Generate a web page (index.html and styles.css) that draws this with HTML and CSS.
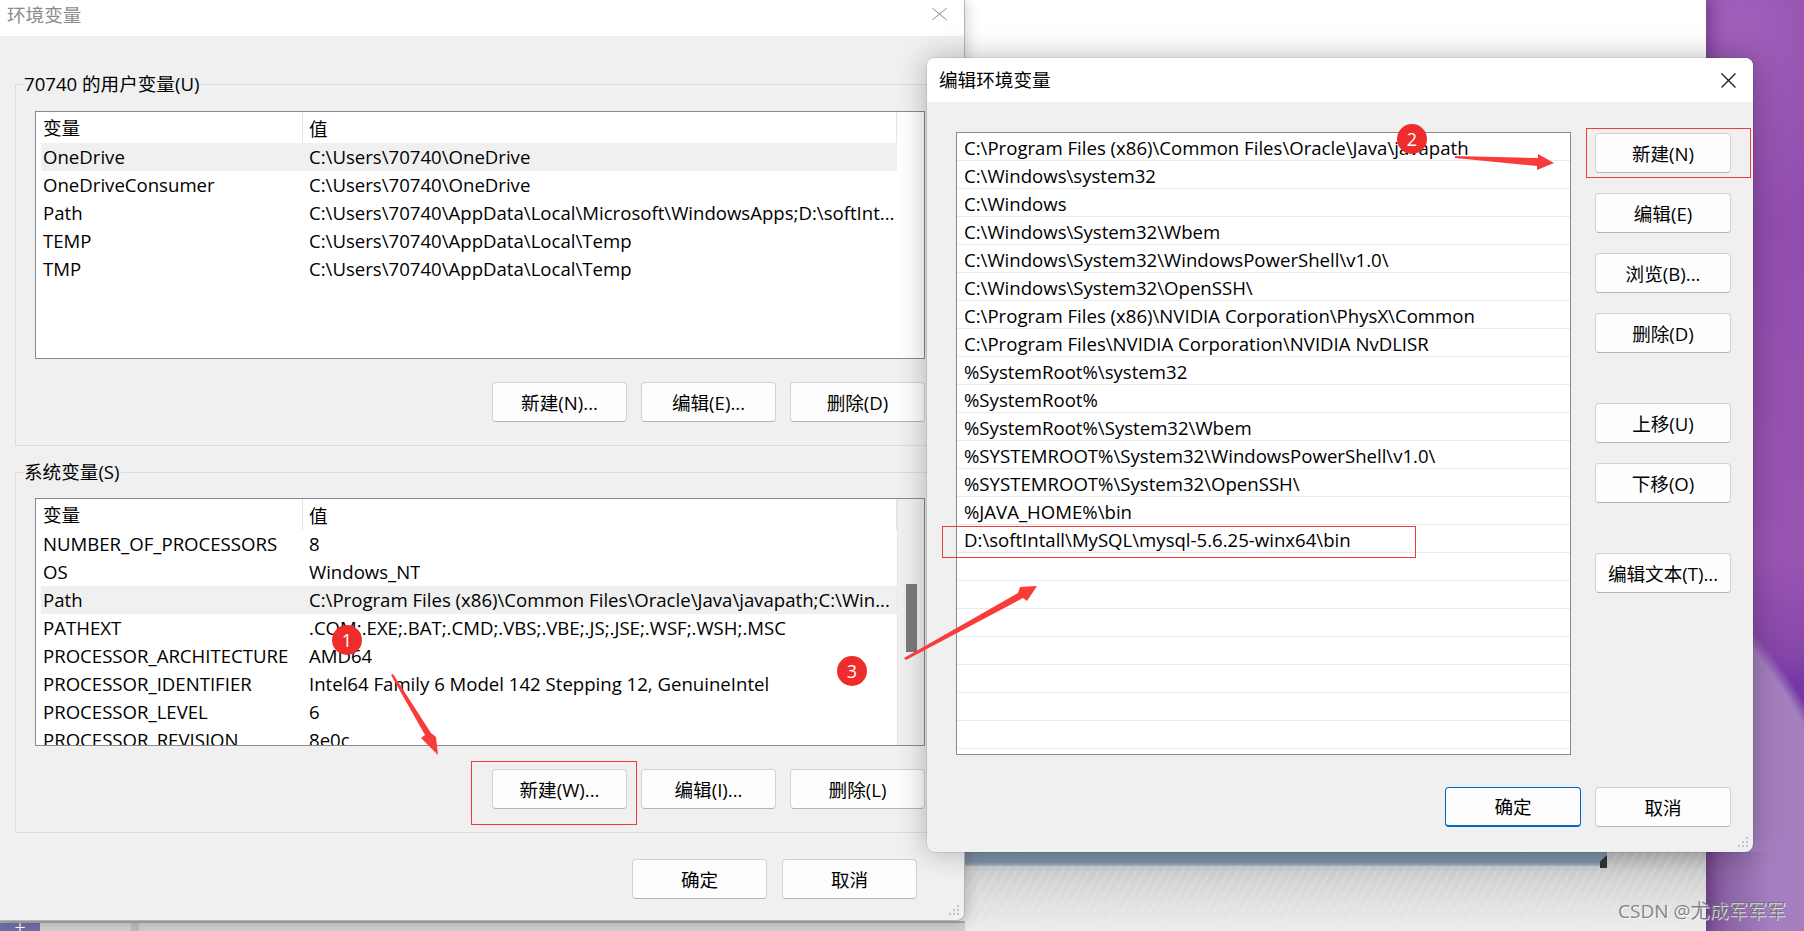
FILE: index.html
```html
<!DOCTYPE html>
<html lang="zh">
<head>
<meta charset="utf-8">
<title>环境变量</title>
<link rel="stylesheet" href="styles.css">
</head>
<body>
<div class="desktop">
  <div class="app-window">
    <div class="app-stripes">
      <div class="app-band"><span class="app-corner"></span></div>
    </div>
  </div>
  <div class="taskbit"><span class="task-icon">王</span><span class="task-gap"></span></div>

  <section class="dialog env">
    <header class="env-title"><span class="env-title-text">环境变量</span>
      <svg class="x-icon" viewBox="0 0 14 14" preserveAspectRatio="none"><path vector-effect="non-scaling-stroke" d="M1 1 13 13M13 1 1 13"/></svg>
    </header>

    <div class="group first">
      <div class="legend">70740 的用户变量(U)</div>
      <div class="list">
        <div class="list-main">
          <div class="thead"><span class="c1">变量</span><span class="c2">值</span></div>
          <div class="tr hl"><span class="c1">OneDrive</span><span class="c2">C:\Users\70740\OneDrive</span></div>
          <div class="tr"><span class="c1">OneDriveConsumer</span><span class="c2">C:\Users\70740\OneDrive</span></div>
          <div class="tr"><span class="c1">Path</span><span class="c2">C:\Users\70740\AppData\Local\Microsoft\WindowsApps;D:\softInt...</span></div>
          <div class="tr"><span class="c1">TEMP</span><span class="c2">C:\Users\70740\AppData\Local\Temp</span></div>
          <div class="tr"><span class="c1">TMP</span><span class="c2">C:\Users\70740\AppData\Local\Temp</span></div>
        </div>
        <div class="scroll-space"></div>
      </div>
      <div class="btn-row">
        <button class="btn">新建(N)...</button>
        <button class="btn">编辑(E)...</button>
        <button class="btn">删除(D)</button>
      </div>
    </div>

    <div class="group second">
      <div class="legend">系统变量(S)</div>
      <div class="list">
        <div class="list-main">
          <div class="thead"><span class="c1">变量</span><span class="c2">值</span></div>
          <div class="tr"><span class="c1">NUMBER_OF_PROCESSORS</span><span class="c2">8</span></div>
          <div class="tr"><span class="c1">OS</span><span class="c2">Windows_NT</span></div>
          <div class="tr hl"><span class="c1">Path</span><span class="c2">C:\Program Files (x86)\Common Files\Oracle\Java\javapath;C:\Win...</span></div>
          <div class="tr"><span class="c1">PATHEXT</span><span class="c2">.COM;.EXE;.BAT;.CMD;.VBS;.VBE;.JS;.JSE;.WSF;.WSH;.MSC</span></div>
          <div class="tr"><span class="c1">PROCESSOR_ARCHITECTURE</span><span class="c2">AMD64</span></div>
          <div class="tr"><span class="c1">PROCESSOR_IDENTIFIER</span><span class="c2">Intel64 Family 6 Model 142 Stepping 12, GenuineIntel</span></div>
          <div class="tr"><span class="c1">PROCESSOR_LEVEL</span><span class="c2">6</span></div>
          <div class="tr"><span class="c1">PROCESSOR_REVISION</span><span class="c2">8e0c</span></div>
        </div>
        <div class="scrollbar"><div class="thumb"></div></div>
      </div>
      <div class="btn-row">
        <button class="btn">新建(W)...</button>
        <button class="btn">编辑(I)...</button>
        <button class="btn">删除(L)</button>
      </div>
    </div>

    <footer class="env-foot">
      <button class="btn">确定</button>
      <button class="btn">取消</button>
    </footer>
    <svg class="grip" viewBox="0 0 12 12"><path d="M9 1h2v2H9zM5 5h2v2H5zM9 5h2v2H9zM1 9h2v2H1zM5 9h2v2H5zM9 9h2v2H9z"/></svg>
  </section>

  <section class="dialog edit">
    <header class="edit-title"><span>编辑环境变量</span>
      <svg class="x-icon dark" viewBox="0 0 14 14"><path d="M0.5 0.5 13.5 13.5M13.5 0.5 0.5 13.5"/></svg>
    </header>
    <div class="edit-body">
      <div class="path-list">
        <div class="path-row">C:\Program Files (x86)\Common Files\Oracle\Java\javapath</div>
        <div class="path-row">C:\Windows\system32</div>
        <div class="path-row">C:\Windows</div>
        <div class="path-row">C:\Windows\System32\Wbem</div>
        <div class="path-row">C:\Windows\System32\WindowsPowerShell\v1.0\</div>
        <div class="path-row">C:\Windows\System32\OpenSSH\</div>
        <div class="path-row">C:\Program Files (x86)\NVIDIA Corporation\PhysX\Common</div>
        <div class="path-row">C:\Program Files\NVIDIA Corporation\NVIDIA NvDLISR</div>
        <div class="path-row">%SystemRoot%\system32</div>
        <div class="path-row">%SystemRoot%</div>
        <div class="path-row">%SystemRoot%\System32\Wbem</div>
        <div class="path-row">%SYSTEMROOT%\System32\WindowsPowerShell\v1.0\</div>
        <div class="path-row">%SYSTEMROOT%\System32\OpenSSH\</div>
        <div class="path-row">%JAVA_HOME%\bin</div>
        <div class="path-row">D:\softIntall\MySQL\mysql-5.6.25-winx64\bin</div>
        <div class="path-row"></div><div class="path-row"></div><div class="path-row"></div>
        <div class="path-row"></div><div class="path-row"></div><div class="path-row"></div>
        <div class="path-row"></div>
      </div>
      <div class="side-btns">
        <button class="btn wide">新建(N)</button>
        <button class="btn wide">编辑(E)</button>
        <button class="btn wide">浏览(B)...</button>
        <button class="btn wide">删除(D)</button>
        <button class="btn wide spaced">上移(U)</button>
        <button class="btn wide">下移(O)</button>
        <button class="btn wide spaced">编辑文本(T)...</button>
      </div>
    </div>
    <footer class="edit-foot">
      <button class="btn wide primary">确定</button>
      <button class="btn wide">取消</button>
    </footer>
    <svg class="grip" viewBox="0 0 12 12"><path d="M9 1h2v2H9zM5 5h2v2H5zM9 5h2v2H9zM1 9h2v2H1zM5 9h2v2H5zM9 9h2v2H9z"/></svg>
  </section>

  <svg class="marks" viewBox="0 0 1804 931">
    <rect class="box" x="471.5" y="761.5" width="165" height="63"/>
    <rect class="box" x="1586.5" y="128.5" width="164" height="49"/>
    <rect class="box" x="942.5" y="526.5" width="473" height="31"/>
    <polygon class="arrow" points="391,675 393,674 431,733 436,737 438,755 421,738 425,735"/>
    <polygon class="arrow" points="1455,156 1538,158 1538,154 1554,163 1537,170 1537,166 1455,158"/>
    <polygon class="arrow" points="904,658 1018,593 1020,587 1037,586 1027,601 1023,598 906,660"/>
  </svg>
  <span class="badge b1">1</span>
  <span class="badge b2">2</span>
  <span class="badge b3">3</span>
  <span class="watermark">CSDN @尤成军军军</span>
</div>
</body>
</html>
```
FILE: styles.css
```css
* { box-sizing: border-box; }
html, body { margin: 0; padding: 0; }
body {
  width: 1804px;
  height: 931px;
  overflow: hidden;
  font-family: "Open Sans", "Noto Sans CJK SC", sans-serif;
  font-size: 18.6px;
  color: #000;
}
.desktop {
  position: relative;
  width: 1804px;
  height: 931px;
  overflow: hidden;
  background:
    linear-gradient(90deg, rgba(95,50,120,.55) 1706px, rgba(95,50,120,0) 1770px) 0 852px / 100% 79px no-repeat,
    radial-gradient(circle 404px at 1455px 905px, #a47fbf 0 97%, rgba(164,127,191,0) 100%),
    radial-gradient(ellipse 110px 36px at 1790px 690px, rgba(105,45,160,.6), rgba(105,45,160,0)),
    radial-gradient(ellipse 160px 200px at 1740px 30px, #a060ba, rgba(160,96,186,0)),
    linear-gradient(180deg, #8c48ab 0%, #9a55b3 60%, #7d3fa6 75%, #8a5ab0 100%);
}
.app-window {
  position: absolute;
  left: 0; top: 0;
  width: 1706px;
  height: 931px;
  background: #fff;
  display: flex;
  flex-direction: column;
  box-shadow: 4px 0 14px rgba(60,20,80,.45);
}
.app-stripes {
  margin-top: 852px;
  flex: 1;
  background:
    repeating-linear-gradient(120deg, rgba(255,255,255,.1) 0 3px, rgba(255,255,255,0) 3px 8px),
    linear-gradient(180deg, #bdbdbd 0, #cfcfcf 25%, #dedede 60%, #ececec 100%);
}
.app-band {
  height: 14px;
  background: linear-gradient(180deg, #7b8fa5 0, #7f93a8 75%, #a5b5c0 100%);
  position: relative;
  margin-right: 99px;
}
.app-corner {
  position: absolute;
  right: 0; top: 3px;
  width: 7px; height: 13px;
  background: #2a3440;
  clip-path: polygon(100% 0, 100% 100%, 0 100%, 0 50%);
}
.taskbit {
  position: absolute;
  left: 0; top: 921px;
  width: 965px; height: 10px;
  background: #d0d0d0;
  border-top: 2px solid #a8a8a8;
  display: flex;
  overflow: hidden;
}
.task-icon {
  width: 40px;
  background: #6f6fa8;
  color: #fff;
  font-size: 13px;
  line-height: 8px;
  text-align: center;
}
.task-gap {
  margin-left: 91px;
  width: 8px;
  background: #bdbdbd;
}
.dialog {
  position: absolute;
  background: #f0f0f0;
}
.env {
  left: 0; top: 0;
  width: 965px; height: 921px;
  border-right: 1px solid #b4b4b4;
  border-bottom: 1px solid #b4b4b4;
  border-bottom-right-radius: 8px;
  box-shadow: 2px 2px 14px rgba(0,0,0,.18);
}
.env-title {
  height: 36px;
  background: #fff;
  display: flex;
  align-items: center;
  justify-content: space-between;
  padding: 0 16px 9px 7px;
  color: #8c8c8c;
}
.x-icon { width: 17px; height: 14px; }
.x-icon path { fill: none; stroke: #8c8c8c; stroke-width: 1; }
.x-icon.dark { width: 15px; height: 15px; }
.x-icon.dark path { stroke: #1a1a1a; stroke-width: 1.2; }
.group {
  margin-left: 15px;
  width: 935px;
  border: 1px solid #dcdcdc;
  border-right: 0;
  padding: 0 0 0 19px;
}
.first { margin-top: 48px; height: 362px; }
.second { margin-top: 26px; height: 361px; }
.legend {
  width: max-content;
  height: 26px;
  line-height: 24px;
  margin: -13px 0 0 -12px;
  padding: 0 1px;
  background: #f0f0f0;
}
.list {
  margin-top: 12px;
  width: 890px;
  height: 248px;
  background: #fff;
  border: 1px solid #868a91;
  display: flex;
  overflow: hidden;
}
.first .list { margin-top: 13px; }
.list-main { flex: 1; min-width: 0; padding-left: 5px; overflow: hidden; }
.scroll-space { width: 27px; }
.scrollbar {
  width: 27px;
  background: #f0f0f0;
  border-left: 1px solid #e8e8e8;
  padding: 85px 0 0 8px;
}
.thumb { width: 11px; height: 68px; background: #7a7a7a; }
.thead {
  display: flex;
  height: 31px;
  align-items: center;
  border-right: 1px solid #e5e5e5;
}
.thead .c1 { border-right: 1px solid #e5e5e5; height: 31px; line-height: 31px; }
.c1 { width: 262px; padding-left: 2px; flex: none; white-space: nowrap; }
.c2 { padding-left: 6px; white-space: nowrap; overflow: hidden; }
.tr { display: flex; height: 28px; line-height: 28px; }
.hl { background: #f0f0f0; }
.btn-row { display: flex; justify-content: flex-end; gap: 14px; margin-top: 23px; width: 890px; }
.btn {
  width: 135px;
  height: 40px;
  padding: 0 0 2px;
  background: #fdfdfd;
  border: 1px solid #d2d2d2;
  border-bottom-color: #b4b4b4;
  border-radius: 4px;
  font: inherit;
  color: #000;
}
.btn.wide { width: 136px; }
.btn.primary { border-width: 1px 1px 2px 1px; border-style: solid; border-color: #0067c0; }
.env-foot { display: flex; justify-content: flex-end; gap: 15px; margin-top: 26px; padding-right: 47px; }
.grip { position: absolute; right: 4px; bottom: 4px; width: 12px; height: 12px; }
.grip path { fill: #c4c4c4; }
.edit {
  left: 927px; top: 58px;
  width: 826px; height: 794px;
  border-radius: 8px;
  box-shadow: 0 0 0 1px rgba(0,0,0,.08), 0 0 30px rgba(0,0,0,.28);
}
.edit-title {
  height: 44px;
  background: #fff;
  border-radius: 8px 8px 0 0;
  display: flex;
  align-items: center;
  justify-content: space-between;
  padding: 0 17px 4px 12px;
}
.edit-title .x-icon { margin-top: 4px; }
.edit-body { display: flex; padding: 30px 0 0 29px; gap: 24px; }
.path-list {
  width: 615px;
  height: 623px;
  background: #fff;
  border: 1px solid #868a91;
  overflow: hidden;
}
.path-row {
  height: 28px;
  line-height: 29px;
  padding-left: 7px;
  border-bottom: 1px solid #eaeaea;
  white-space: nowrap;
}
.side-btns { display: flex; flex-direction: column; gap: 20px; margin-top: 1px; }
.spaced { margin-top: 30px; }
.edit-foot { display: flex; justify-content: flex-end; gap: 14px; margin-top: 32px; padding-right: 22px; }
.marks { position: absolute; left: 0; top: 0; width: 1804px; height: 931px; pointer-events: none; }
.box { fill: none; stroke: #f23a3a; stroke-width: 1; }
.arrow { fill: #f83c3c; }
.badge {
  position: absolute;
  width: 30px; height: 30px;
  border-radius: 50%;
  background: #ee2c2c;
  color: #fff;
  text-align: center;
  line-height: 30px;
  font-size: 18px;
}
.b1 { left: 332px; top: 625px; }
.b2 { left: 1397px; top: 124px; }
.b3 { left: 837px; top: 656px; }
.watermark {
  position: absolute;
  left: 1618px; top: 898px;
  font-size: 19px;
  line-height: 26px;
  white-space: nowrap;
  color: rgba(110,110,110,.85);
  text-shadow: 1px 1px 0 rgba(255,255,255,.75);
}
```
